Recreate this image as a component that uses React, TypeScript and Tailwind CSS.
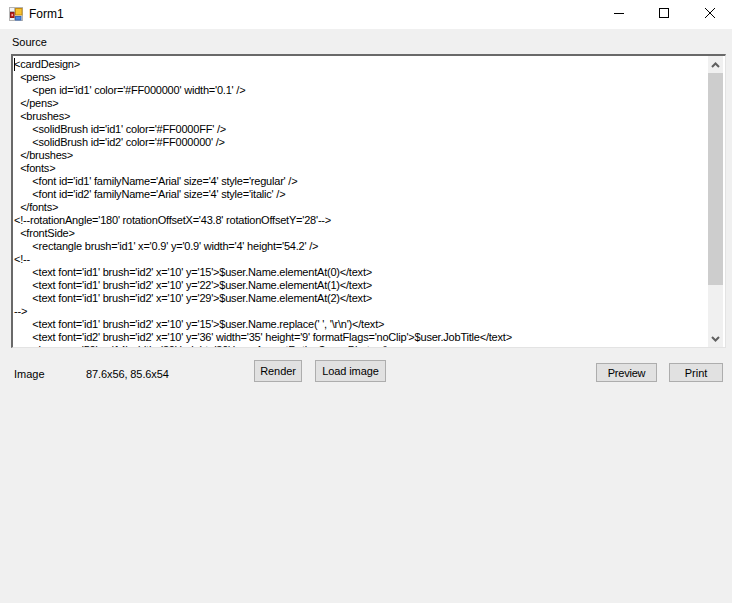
import React from "react";

const lines = [
  "<cardDesign>",
  "  <pens>",
  "      <pen id='id1' color='#FF000000' width='0.1' />",
  "  </pens>",
  "  <brushes>",
  "      <solidBrush id='id1' color='#FF0000FF' />",
  "      <solidBrush id='id2' color='#FF000000' />",
  "  </brushes>",
  "  <fonts>",
  "      <font id='id1' familyName='Arial' size='4' style='regular' />",
  "      <font id='id2' familyName='Arial' size='4' style='italic' />",
  "  </fonts>",
  "<!--rotationAngle='180' rotationOffsetX='43.8' rotationOffsetY='28'-->",
  "  <frontSide>",
  "      <rectangle brush='id1' x='0.9' y='0.9' width='4' height='54.2' />",
  "<!--",
  "      <text font='id1' brush='id2' x='10' y='15'>$user.Name.elementAt(0)</text>",
  "      <text font='id1' brush='id2' x='10' y='22'>$user.Name.elementAt(1)</text>",
  "      <text font='id1' brush='id2' x='10' y='29'>$user.Name.elementAt(2)</text>",
  "-->",
  "      <text font='id1' brush='id2' x='10' y='15'>$user.Name.replace(' ', '\\r\\n')</text>",
  "      <text font='id2' brush='id2' x='10' y='36' width='35' height='9' formatFlags='noClip'>$user.JobTitle</text>",
  "      <image x='50' y='14' width='30' height='30' keepAspectRatio>$user.Photo</image>",
];

function Btn({ label, className }: { label: string; className: string }) {
  return (
    <button className={`${className} border border-[#adadad] bg-[#e1e1e1] text-[11px] leading-[16px] text-black text-center`}>
      {label}
    </button>
  );
}

export default function App() {
  return (
    <div className="w-[732px] h-[603px] bg-[#f0f0f0] flex flex-col overflow-hidden text-black text-[11px] font-['Liberation_Sans',Arial,sans-serif]">
      <div className="h-[29px] bg-white flex items-center shrink-0">
        <svg width="14" height="14" viewBox="0 0 14 14" className="ml-[9px] mb-[2px]">
          <rect x="0.5" y="0.5" width="13" height="13" fill="#f4f4f4" stroke="#b4b4b4" />
          <path d="M0.5 4.5H6M5.5 0.5V13.5" stroke="#b4b4b4" fill="none" />
          <rect x="6.5" y="1.5" width="6.5" height="6.5" fill="#f6c232" stroke="#c48c14" />
          <rect x="1.5" y="5.5" width="3.5" height="5" fill="#c8201c" stroke="#8c1a18" />
          <rect x="2.5" y="7" width="1.5" height="2" fill="#f0a0a0" />
          <rect x="6.5" y="9.5" width="5.5" height="3.5" fill="#4f86e0" stroke="#3566b4" />
        </svg>
        <span className="ml-[6px] text-[12px] mb-[2px]">Form1</span>
        <div className="ml-auto flex items-center">
          <svg width="46" height="29" viewBox="0 0 46 29">
            <path d="M20 13.5H30" stroke="#000" strokeWidth="1" />
          </svg>
          <svg width="46" height="29" viewBox="0 0 46 29">
            <rect x="19.5" y="8.5" width="9" height="9" fill="none" stroke="#000" />
          </svg>
          <svg width="46" height="29" viewBox="0 0 46 29">
            <path d="M19 8L29 18M29 8L19 18" stroke="#000" strokeWidth="1" fill="none" />
          </svg>
        </div>
      </div>

      <div className="ml-[12px] mt-[7px] h-[13px] leading-[13px]">Source</div>

      <div className="ml-[11px] mt-[5px] w-[715px] h-[294px] shrink-0 bg-white border-t-2 border-l-2 border-t-[#696969] border-l-[#696969] border-r border-b border-r-[#e3e3e3] border-b-[#e3e3e3] flex overflow-hidden">
        <div className="relative flex-1 overflow-hidden pt-[2px] pl-[1px]">
          <div className="absolute left-[1px] top-[2px] w-px h-[13px] bg-black" />
          {lines.map((l, i) => {
            const body = l.trimStart();
            const indent = l.slice(0, l.length - body.length);
            return (
              <div key={i} className="h-[13px] leading-[13px] whitespace-pre text-[11px]">
                <span>{indent}</span>
                <span className="tracking-[-0.21px]">{body}</span>
              </div>
            );
          })}
        </div>
        <div className="w-[15px] mr-[2px] bg-[#f0f0f0] flex flex-col shrink-0">
          <div className="h-[17px] flex items-center justify-center">
            <svg width="9" height="6" viewBox="0 0 9 6">
              <path d="M1 5L4.5 1.5L8 5" stroke="#606060" strokeWidth="2" fill="none" />
            </svg>
          </div>
          <div className="h-[212px] bg-[#cdcdcd]" />
          <div className="flex-1" />
          <div className="h-[17px] flex items-center justify-center">
            <svg width="9" height="6" viewBox="0 0 9 6">
              <path d="M1 1L4.5 4.5L8 1" stroke="#606060" strokeWidth="2" fill="none" />
            </svg>
          </div>
        </div>
      </div>

      <div className="mt-[12px] h-[22px] flex items-start pr-[9px]">
        <span className="ml-[14px] w-[72px] mt-[8px] h-[13px] leading-[13px]">Image</span>
        <span className="w-[168px] mt-[8px] h-[13px] leading-[13px] tracking-[-0.1px]">87.6x56, 85.6x54</span>
        <div className="flex items-start gap-[13px]">
          <Btn label="Render" className="w-[48px] h-[22px] tracking-[-0.1px]" />
          <Btn label="Load image" className="w-[71px] h-[22px] tracking-[-0.1px]" />
        </div>
        <div className="ml-auto flex items-start gap-[12px] mt-[3px]">
          <Btn label="Preview" className="w-[61px] h-[19px] tracking-[-0.2px]" />
          <Btn label="Print" className="w-[54px] h-[19px]" />
        </div>
      </div>
    </div>
  );
}
